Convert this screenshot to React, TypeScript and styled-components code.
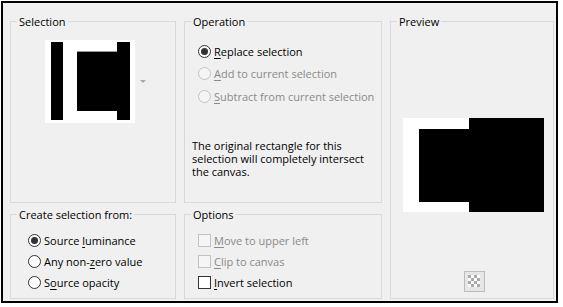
import React, { FC } from 'react';
import styled, { createGlobalStyle, css } from 'styled-components';

const GlobalStyle = createGlobalStyle`
  html, body {
    margin: 0;
    padding: 0;
    background: #ffffff;
  }
  body {
    font-family: 'Open Sans', 'Noto Sans', sans-serif;
    font-size: 11px;
    color: #000;
  }
`;

const Dialog = styled.div`
  box-sizing: border-box;
  margin: 1px 0 0 1px;
  width: 557px;
  height: 302px;
  border: 2px solid #000;
  background: #f0f0f0;
  padding: 11px 0 0 7px;
  display: grid;
  grid-template-columns: 166px 198px 164px;
  grid-template-rows: 189px 92px;
  column-gap: 8px;
  row-gap: 4px;
`;

const Group = styled.fieldset<{ $span?: boolean }>`
  box-sizing: border-box;
  margin: 0;
  padding: 0;
  min-width: 0;
  border: 1px solid #d9d9d9;
  display: flex;
  flex-direction: column;
  ${(p) =>
    p.$span &&
    css`
      grid-column: 3;
      grid-row: 1 / 3;
    `}
`;

const Legend = styled.legend`
  margin-left: 6px;
  padding: 0 2px;
  line-height: 15px;
  font-size: 11px;
  color: #000;
`;

const ThumbRow = styled.div`
  display: flex;
  align-items: center;
  margin: 11px 0 0 34px;
  gap: 5px;
`;

const DropArrow = styled.span`
  width: 0;
  height: 0;
  border-left: 3px solid transparent;
  border-right: 3px solid transparent;
  border-top: 3px solid #a8a8a8;
`;

const OptionList = styled.div<{ $top: number; $left: number; $row: number }>`
  display: flex;
  flex-direction: column;
  margin: ${(p) => p.$top}px 0 0 ${(p) => p.$left}px;
  & > * {
    height: ${(p) => p.$row}px;
  }
`;

const Choice = styled.label<{ $disabled?: boolean }>`
  display: flex;
  align-items: center;
  gap: 3px;
  color: ${(p) => (p.$disabled ? '#8a8a8a' : '#000')};
  white-space: nowrap;
  u {
    text-decoration-thickness: 1px;
    text-underline-offset: 2px;
  }
`;

const RadioMark = styled.span<{ $checked?: boolean; $disabled?: boolean }>`
  box-sizing: border-box;
  flex: none;
  width: 13px;
  height: 13px;
  border-radius: 50%;
  border: 1px solid ${(p) => (p.$disabled ? '#c2c2c2' : '#333')};
  background: ${(p) => (p.$disabled ? '#f5f5f5' : '#fff')};
  display: flex;
  align-items: center;
  justify-content: center;
  &::after {
    content: '';
    display: ${(p) => (p.$checked ? 'block' : 'none')};
    width: 7px;
    height: 7px;
    border-radius: 50%;
    background: #333;
  }
`;

const CheckMark = styled.span<{ $disabled?: boolean }>`
  box-sizing: border-box;
  flex: none;
  width: 13px;
  height: 13px;
  border: 1px solid ${(p) => (p.$disabled ? '#c2c2c2' : '#333')};
  background: ${(p) => (p.$disabled ? '#f5f5f5' : '#fff')};
`;

const Note = styled.p`
  margin: 31px 0 0 7px;
  line-height: 13px;
  width: 180px;
`;

const PreviewBody = styled.div`
  display: flex;
  flex-direction: column;
  align-items: flex-start;
  padding-left: 12px;
`;

const PreviewPic = styled.svg`
  display: block;
  margin-top: 89px;
`;

const Checker = styled.svg`
  display: block;
  margin: 59px 0 0 61px;
`;

const Thumb: FC = () => (
  <svg width="90" height="83" viewBox="0 0 90 83">
    <rect width="90" height="83" fill="#fff" />
    <rect x="6" y="2" width="12" height="78" fill="#000" />
    <rect x="32" y="12" width="53" height="59" fill="#000" />
    <rect x="72" y="2" width="13" height="78" fill="#000" />
    <rect x="32" y="11" width="40" height="1" fill="#9a9a9a" />
  </svg>
);

const CheckerIcon: FC = () => {
  const cells = [];
  for (let r = 0; r < 4; r++) {
    for (let c = 0; c < 4; c++) {
      if ((r + c) % 2 === 0) {
        cells.push(<rect key={`${r}-${c}`} x={4 + c * 3} y={4 + r * 3} width="3" height="3" fill="#a9a9a9" />);
      }
    }
  }
  return (
    <Checker width="21" height="21" viewBox="0 0 21 21">
      <rect x="0.5" y="0.5" width="20" height="20" fill="#e6e6e6" stroke="#bcbcbc" />
      <rect x="4" y="4" width="12" height="12" fill="#fff" />
      {cells}
    </Checker>
  );
};

export default function App() {
  return (
    <>
      <GlobalStyle />
      <Dialog>
        <Group>
          <Legend>Selection</Legend>
          <ThumbRow>
            <Thumb />
            <DropArrow />
          </ThumbRow>
        </Group>

        <Group>
          <Legend>Operation</Legend>
          <OptionList $top={11} $left={13} $row={22.5}>
            <Choice>
              <RadioMark $checked />
              <span><u>R</u>eplace selection</span>
            </Choice>
            <Choice $disabled>
              <RadioMark $disabled />
              <span><u>A</u>dd to current selection</span>
            </Choice>
            <Choice $disabled>
              <RadioMark $disabled />
              <span><u>S</u>ubtract from current selection</span>
            </Choice>
          </OptionList>
          <Note>
            The original rectangle for this selection will completely intersect the canvas.
          </Note>
        </Group>

        <Group $span>
          <Legend>Preview</Legend>
          <PreviewBody>
            <PreviewPic width="141" height="94" viewBox="0 0 141 94">
              <rect width="141" height="94" fill="#fff" />
              <rect x="66" y="0" width="75" height="94" fill="#000" />
              <rect x="16" y="11" width="125" height="73" fill="#000" />
            </PreviewPic>
            <CheckerIcon />
          </PreviewBody>
        </Group>

        <Group>
          <Legend>Create selection from:</Legend>
          <OptionList $top={8} $left={17} $row={21}>
            <Choice>
              <RadioMark $checked />
              <span>Source <u>l</u>uminance</span>
            </Choice>
            <Choice>
              <RadioMark />
              <span>Any non-<u>z</u>ero value</span>
            </Choice>
            <Choice>
              <RadioMark />
              <span>S<u>o</u>urce opacity</span>
            </Choice>
          </OptionList>
        </Group>

        <Group>
          <Legend>Options</Legend>
          <OptionList $top={8} $left={13} $row={21}>
            <Choice $disabled>
              <CheckMark $disabled />
              <span><u>M</u>ove to upper left</span>
            </Choice>
            <Choice $disabled>
              <CheckMark $disabled />
              <span><u>C</u>lip to canvas</span>
            </Choice>
            <Choice>
              <CheckMark />
              <span><u>I</u>nvert selection</span>
            </Choice>
          </OptionList>
        </Group>
      </Dialog>
    </>
  );
}
